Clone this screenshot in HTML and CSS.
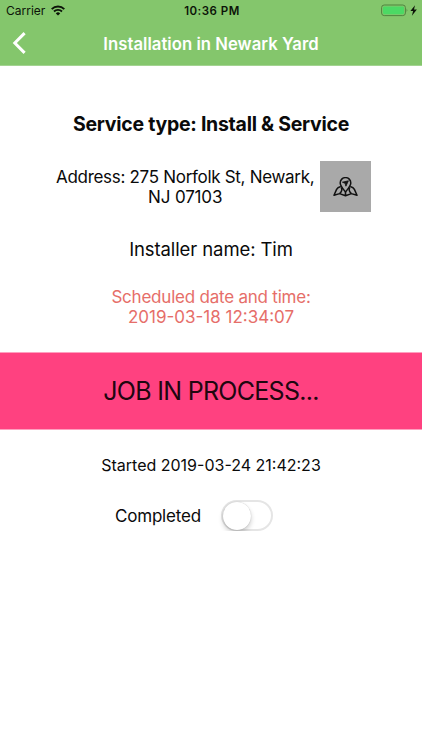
FILE: index.html
```html
<!DOCTYPE html>
<html lang="en">
<head>
<meta charset="utf-8">
<title>Installation in Newark Yard</title>
<link rel="stylesheet" href="styles.css">
</head>
<body>
<header class="header">
  <div class="status">
    <div class="carrier"><span>Carrier</span>
      <svg width="14" height="11" viewBox="0 0 14 11"><g fill="none" stroke="#0c1408" stroke-width="1.9"><path d="M.7 4.1a8.9 8.9 0 0 1 12.6 0"/><path d="M3 6.5a5.7 5.7 0 0 1 8 0"/></g><path d="M4.8 8.4a3.1 3.1 0 0 1 4.4 0L7 10.6z" fill="#0c1408"/></svg>
    </div>
    <span class="clock">10:36 PM</span>
    <svg class="battery" width="37" height="13" viewBox="0 0 37 13"><rect x=".6" y="1" width="23.8" height="10.6" rx="2.6" fill="none" stroke="#4f853f"/><rect x="2" y="2.4" width="21" height="7.8" rx="1.4" fill="#4cd964"/><path d="M25.6 4.5q1.7 1.8 0 3.6z" fill="#4f853f"/><path d="M34 1.2 29.4 7h2.7l-1.2 4.7L35.9 5.5h-2.9z" fill="#0c1408"/></svg>
  </div>
  <nav class="nav">
    <svg class="back" width="16" height="24" viewBox="0 0 16 24"><path d="M14.6 1.1 4.8 11l9.8 9.9" fill="none" stroke="#fff" stroke-width="3"/></svg>
    <h1 class="title">Installation in Newark Yard</h1>
  </nav>
</header>
<main class="content">
  <h2 class="service">Service type: Install &amp; Service</h2>
  <div class="address">
    <p class="address-text">Address: 275 Norfolk St, Newark,<br><span class="city">NJ 07103</span></p>
    <button class="map" aria-label="Map">
      <svg width="25" height="20" viewBox="0 0 25 20" fill="none" stroke="#111" stroke-width="1.5" stroke-linejoin="round"><path d="M12.5 15C9.7 11.4 7.2 8.8 7.2 5.9a5.3 5.3 0 0 1 10.6 0c0 2.9-2.5 5.5-5.3 9.1z"/><path d="M7.8 9.5Q4.6 10.3 3.6 12.4L1 18.3l5.6-1.7 5.9 2.1 5.9-2.1 5.6 1.7-2.6-5.9q-1-2.1-4.2-2.9M12.5 14.8v3.9M8.3 10.6q1.6 3.2-1.7 6M16.7 10.6q-1.6 3.2 1.7 6"/><path d="m9.4 5.2 6-1.4-2.5 5.4-.8-2.9z" fill="#111" stroke-width=".8"/></svg>
    </button>
  </div>
  <p class="installer">Installer name: Tim</p>
  <p class="scheduled"><span class="sched-label">Scheduled date and time:</span><br><span class="sched-time">2019-03-18 12:34:07</span></p>
  <div class="banner">JOB IN PROCESS...</div>
  <p class="started">Started 2019-03-24 21:42:23</p>
  <div class="completed"><span class="completed-label">Completed</span><span class="toggle" role="switch" aria-checked="false"><span class="knob"></span></span></div>
</main>
</body>
</html>
```
FILE: styles.css
```css
* { box-sizing: border-box; }
body { margin: 0; background: #fff; color: #0a0a0a; font-family: Inter, "Liberation Sans", sans-serif; }
h1, h2, p { margin: 0; font-weight: 400; }
svg { display: block; }
.header { height: 66px; background: #84c66c; border-bottom: 1px solid #a3d391; }
.status { height: 21px; display: grid; grid-template-columns: 1fr auto 1fr; align-items: center; padding: 0 4px 0 6px; color: #0c1408; }
.carrier { display: flex; align-items: center; gap: 6px; font-size: 12px; letter-spacing: 0; }
.clock { font-size: 11.5px; font-weight: 600; letter-spacing: 0.5px; }
.battery { justify-self: end; }
.nav { height: 44px; display: grid; grid-template-columns: 28px 1fr 28px; align-items: center; padding: 1px 10px 0; }
.title { color: #fff; font-size: 16.7px; font-weight: 600; text-align: center; white-space: nowrap; letter-spacing: 0.03px; }
.content { text-align: center; white-space: nowrap; }
.service { margin-top: 46px; font-size: 19.5px; line-height: 24px; font-weight: 700; letter-spacing: -0.27px; }
.address { margin: 25px 51px 0 56px; height: 51px; display: flex; align-items: center; justify-content: space-between; }
.address-text { font-size: 17px; line-height: 20px; letter-spacing: -0.3px; }
.city { letter-spacing: -0.15px; }
.map { width: 51px; height: 51px; padding: 0; border: 0; background: #a9a9a9; display: flex; align-items: center; justify-content: center; }
.installer { margin-top: 25px; font-size: 18.5px; line-height: 24px; letter-spacing: -0.1px; }
.scheduled { margin-top: 26px; font-size: 17px; line-height: 20px; color: #e66e69; }
.sched-label { letter-spacing: -0.22px; }
.banner { margin-top: 25px; height: 78px; line-height: 77px; border: solid #ffa0bf; border-width: 1px 0; background: #ff4180; color: #20060f; font-size: 25px; letter-spacing: -0.7px; }
.started { margin-top: 25px; font-size: 16px; line-height: 20px; }
.completed { margin: 24px 0 0 115px; height: 32px; display: flex; align-items: center; gap: 20px; font-size: 17px; letter-spacing: -0.2px; }
.completed-label { padding-top: 2px; }
.toggle { width: 52px; height: 31px; border: 2px solid #e5e5e5; border-radius: 16px; }
.knob { display: block; width: 28px; height: 28px; border-radius: 50%; background: #fff; box-shadow: 0 3px 5px rgba(0,0,0,.2), 0 0 1px rgba(0,0,0,.25); }
```
